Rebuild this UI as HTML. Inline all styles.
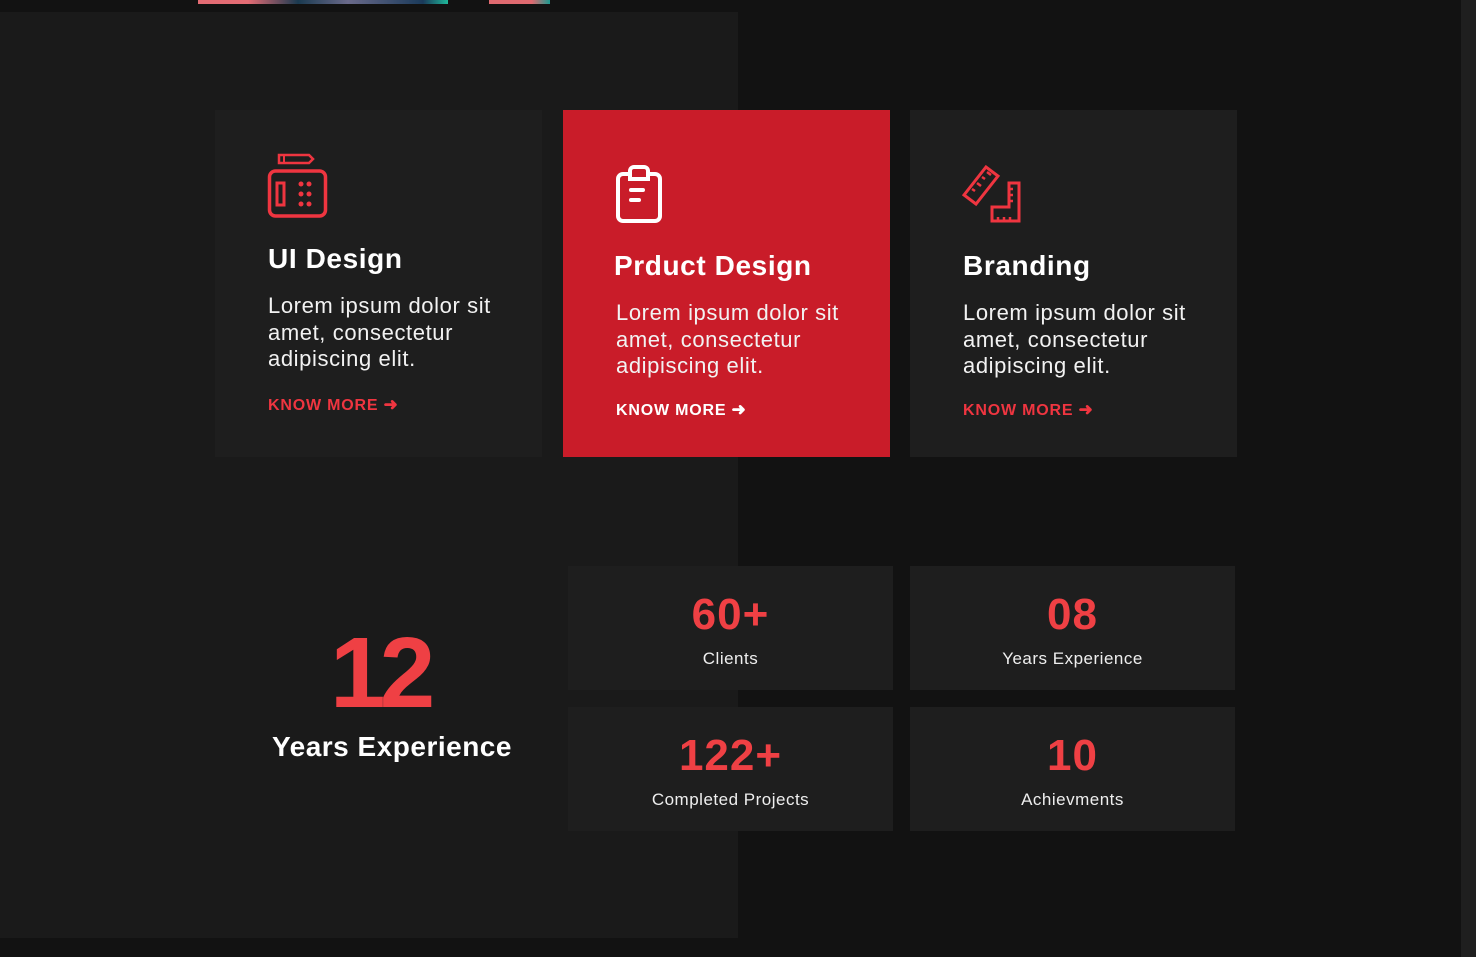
<!DOCTYPE html>
<html><head><style>
*{margin:0;padding:0;box-sizing:border-box}
body{width:1476px;height:957px;background:#121212;position:relative;overflow:hidden;font-family:"Liberation Sans",sans-serif;color:#fff}
.abs{position:absolute}
.panel{left:0;top:12px;width:738px;height:926px;background:#1a1a1a}
.sb{left:1461px;top:0;width:15px;height:957px;background:#1f1f1f}
.card{background:#1e1e1e;width:327px;height:347px;top:110px}
.card h3{position:absolute;left:53px;font-size:28px;font-weight:700;letter-spacing:.6px}
.card p{position:absolute;left:53px;width:270px;font-size:22px;line-height:26.5px;color:#f2f2f2;letter-spacing:.6px}
.card a{position:absolute;left:53px;font-size:16px;font-weight:700;color:#ef3540;letter-spacing:.8px;text-decoration:none}
.card svg.ic{position:absolute;left:52px}
.red{background:#c91c29}
.red a{color:#fff}
.stat{background:#1e1e1e;width:325px;height:124px;text-align:center}
.stat b{display:block;font-size:44px;color:#ef4044;margin-top:24px;line-height:50px;font-weight:900;letter-spacing:1px}
.stat span{display:block;font-size:17px;color:#eee;margin-top:9px;letter-spacing:.5px}
</style></head><body>
<div class="abs" style="left:198px;top:0;width:250px;height:4px;background:linear-gradient(90deg,#e46c74 0 20%,#1a3a50 40%,#6a6a8a 60%,#1a3a5a 90%,#1fb89a 100%)"></div>
<div class="abs" style="left:489px;top:0;width:61px;height:4px;background:linear-gradient(90deg,#e06a70 70%,#1a9a90)"></div>
<div class="abs panel"></div>
<div class="abs sb"></div>

<div class="abs card" style="left:215px">
<svg class="ic" style="top:43px" width="62" height="66" viewBox="0 0 62 66" fill="none" stroke="#ef3540" stroke-width="3.5"><path d="M12 2h30l4 4-4 4H12z" stroke-width="2.5"/><line x1="17" y1="3" x2="17" y2="9" stroke-width="2"/><rect x="2.5" y="18" width="56" height="45" rx="6"/><rect x="10" y="30" width="7" height="22" stroke-width="3"/><g fill="#ef3540" stroke="none"><circle cx="34" cy="31" r="2.5"/><circle cx="42" cy="31" r="2.5"/><circle cx="34" cy="41" r="2.5"/><circle cx="42" cy="41" r="2.5"/><circle cx="34" cy="51" r="2.5"/><circle cx="42" cy="51" r="2.5"/></g></svg>
<h3 style="top:133px">UI Design</h3>
<p style="top:183px">Lorem ipsum dolor sit amet, consectetur adipiscing elit.</p>
<a style="top:285px">KNOW MORE <b style="font-size:17px">&#10140;</b></a>
</div>

<div class="abs card red" style="left:563px">
<svg class="ic" style="top:55px" width="48" height="58" viewBox="0 0 48 58" fill="none" stroke="#fff" stroke-width="4" stroke-linecap="round"><path d="M14 9H8a5 5 0 0 0-5 5v37a5 5 0 0 0 5 5h32a5 5 0 0 0 5-5V14a5 5 0 0 0-5-5h-6"/><path d="M15 14V6a4 4 0 0 1 4-4h10a4 4 0 0 1 4 4v8z"/><line x1="16" y1="25" x2="28" y2="25"/><line x1="16" y1="35" x2="24" y2="35"/></svg>
<h3 style="top:140px;left:51px">Prduct Design</h3>
<p style="top:190px">Lorem ipsum dolor sit amet, consectetur adipiscing elit.</p>
<a style="top:290px;color:#fff">KNOW MORE <b style="font-size:17px">&#10140;</b></a>
</div>

<div class="abs card" style="left:910px">
<svg class="ic" style="top:55px" width="60" height="58" viewBox="0 0 60 58" fill="none" stroke="#ef3540" stroke-width="3"><path d="M2 30L24 2l12 9L14 39z"/><path d="M10 24l3 2M15 18l4 3M20 12l3 2M25 7l4 3" stroke-width="2.5"/><path d="M30 56V42h17V18h10v38z"/><path d="M47 24h4M47 30h4M47 36h4M36 56v-4M42 56v-4M48 56v-4" stroke-width="2.5"/></svg>
<h3 style="top:140px">Branding</h3>
<p style="top:190px">Lorem ipsum dolor sit amet, consectetur adipiscing elit.</p>
<a style="top:290px">KNOW MORE <b style="font-size:17px">&#10140;</b></a>
</div>

<div class="abs" style="left:330px;top:618px;font-size:100px;font-weight:900;color:#ef4044;letter-spacing:-6px;line-height:110px">12</div>
<div class="abs" style="left:272px;top:731px;font-size:28px;font-weight:700;letter-spacing:.5px">Years Experience</div>

<div class="abs stat" style="left:568px;top:566px"><b>60+</b><span>Clients</span></div>
<div class="abs stat" style="left:910px;top:566px"><b>08</b><span>Years Experience</span></div>
<div class="abs stat" style="left:568px;top:707px"><b>122+</b><span>Completed Projects</span></div>
<div class="abs stat" style="left:910px;top:707px"><b>10</b><span>Achievments</span></div>
</body></html>
